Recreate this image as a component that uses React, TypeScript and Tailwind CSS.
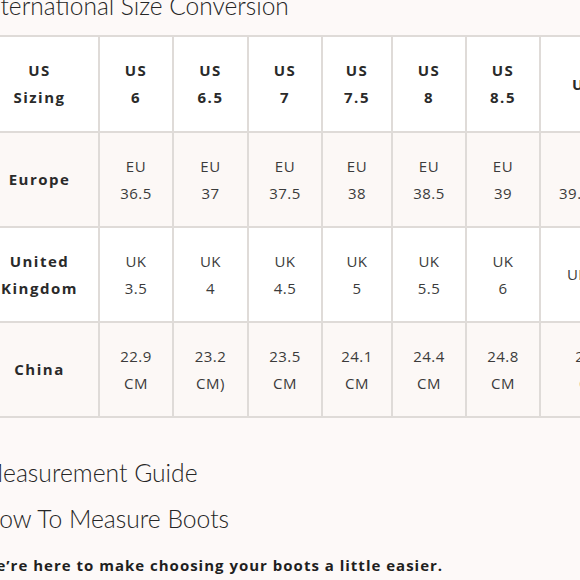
import React, { FC } from "react";

type Row = {
	label: string[];
	cells: string[][];
	bg: string;
	h: string;
	head?: boolean;
};

const widths = [
	"w-[119px]",
	"w-[74px]",
	"w-[75px]",
	"w-[74px]",
	"w-[70px]",
	"w-[74px]",
	"w-[74px]",
	"w-[102px]",
];

const rows: Row[] = [
	{
		label: ["US", "Sizing"],
		cells: [["US", "6"], ["US", "6.5"], ["US", "7"], ["US", "7.5"], ["US", "8"], ["US", "8.5"], ["US 9"]],
		bg: "bg-white",
		h: "h-[96px]",
		head: true,
	},
	{
		label: ["Europe"],
		cells: [["EU", "36.5"], ["EU", "37"], ["EU", "37.5"], ["EU", "38"], ["EU", "38.5"], ["EU", "39"], ["EU", "39.5 - 40"]],
		bg: "bg-[#fcf8f6]",
		h: "h-[95px]",
	},
	{
		label: ["United", "Kingdom"],
		cells: [["UK", "3.5"], ["UK", "4"], ["UK", "4.5"], ["UK", "5"], ["UK", "5.5"], ["UK", "6"], ["UK 6.5"]],
		bg: "bg-white",
		h: "h-[95px]",
	},
	{
		label: ["China"],
		cells: [["22.9", "CM"], ["23.2", "CM)"], ["23.5", "CM"], ["24.1", "CM"], ["24.4", "CM"], ["24.8", "CM"], ["25.1", "CM"]],
		bg: "bg-[#fcf8f6]",
		h: "h-[95px]",
	},
];

const Cell: FC<{ lines: string[]; w: string; bold?: boolean }> = ({ lines, w, bold }) => (
	<div
		className={`${w} shrink-0 flex flex-col items-center justify-center border-r-2 border-[#dfdbd8] text-center text-[15px] leading-[27px] ${
			bold ? "font-bold tracking-[1.5px] text-[#2a2a2a]" : "tracking-[0.5px] text-[#3b3b3b]"
		}`}
	>
		{lines.map((l, i) => (
			<span key={i} className="whitespace-nowrap">
				{l}
			</span>
		))}
	</div>
);

const App: FC = () => {
	return (
		<div className="w-[580px] h-[580px] overflow-hidden bg-[#fdf9f8]">
			<div className="ml-[-19px] mt-[-9px] w-[700px]">
				<h2 className="text-[24.5px] leading-[30px] font-light text-[#262626] font-['Lato',sans-serif]">
					International Size Conversion
				</h2>
				<div className="mt-[14px] border-t-2 border-[#dfdbd8] font-['Open_Sans',sans-serif]">
					{rows.map((row, r) => (
						<div key={r} className={`flex ${row.h} ${row.bg} border-b-2 border-[#dfdbd8]`}>
							<Cell lines={row.label} w={widths[0]} bold />
							{row.cells.map((c, i) => (
								<Cell key={i} lines={c} w={widths[i + 1]} bold={row.head} />
							))}
						</div>
					))}
				</div>
				<h3 className="mt-[40px] text-[24.7px] leading-[30px] font-light text-[#262626] font-['Lato',sans-serif]">
					Measurement Guide
				</h3>
				<h3 className="mt-[16px] text-[24.7px] leading-[30px] font-light text-[#262626] font-['Lato',sans-serif]">
					How To Measure Boots
				</h3>
				<p className="mt-[21px] text-[15px] leading-[20px] font-bold tracking-[1px] text-[#1f1f1f] font-['Open_Sans',sans-serif]">
					We’re here to make choosing your boots a little easier.
				</p>
			</div>
		</div>
	);
};

export default App;
